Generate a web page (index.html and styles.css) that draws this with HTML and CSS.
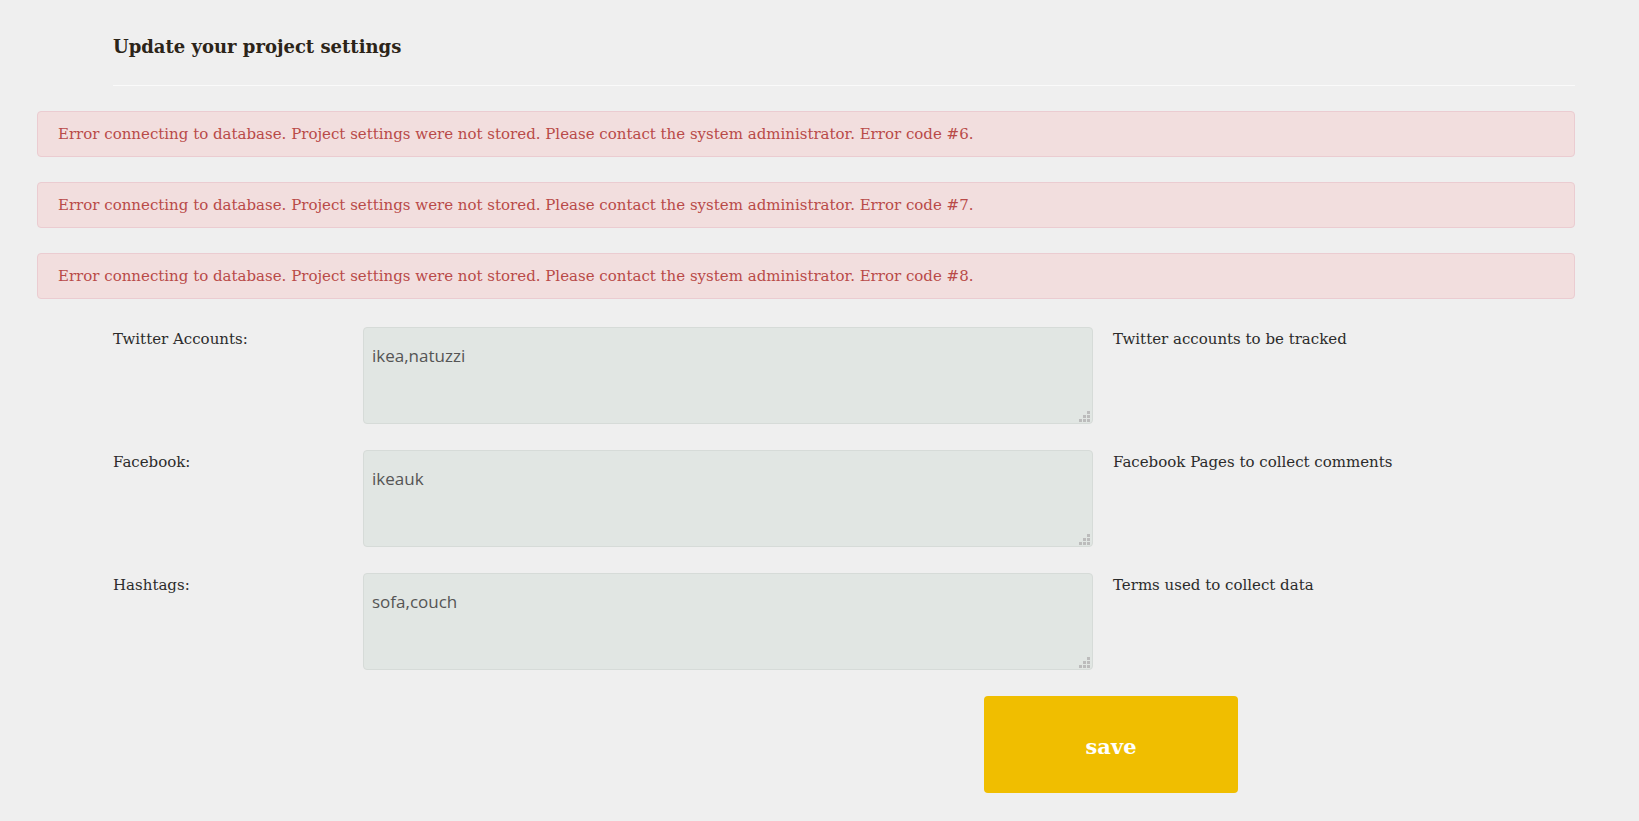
FILE: index.html
```html
<!DOCTYPE html>
<html>
<head>
<meta charset="utf-8">
<link rel="stylesheet" href="styles.css">
</head>
<body>
<div class="page">
  <h2 class="title">Update your project settings</h2>
  <div class="alerts">
    <div class="alert">Error connecting to database. Project settings were not stored. Please contact the system administrator. Error code #6.</div>
    <div class="alert">Error connecting to database. Project settings were not stored. Please contact the system administrator. Error code #7.</div>
    <div class="alert">Error connecting to database. Project settings were not stored. Please contact the system administrator. Error code #8.</div>
  </div>
  <form class="form">
    <div class="row">
      <label class="label">Twitter Accounts:</label>
      <div class="field-wrap"><textarea class="field">ikea,natuzzi</textarea></div>
      <div class="hint">Twitter accounts to be tracked</div>
    </div>
    <div class="row">
      <label class="label">Facebook:</label>
      <div class="field-wrap"><textarea class="field">ikeauk</textarea></div>
      <div class="hint">Facebook Pages to collect comments</div>
    </div>
    <div class="row">
      <label class="label">Hashtags:</label>
      <div class="field-wrap"><textarea class="field">sofa,couch</textarea></div>
      <div class="hint">Terms used to collect data</div>
    </div>
    <div class="actions">
      <button type="button" class="save">save</button>
    </div>
  </form>
</div>
</body>
</html>
```
FILE: styles.css
```css
html, body {
  margin: 0;
  padding: 0;
  background: #efefef;
}
body {
  font-family: "DejaVu Serif", Georgia, serif;
  color: #2b2b2b;
}
.page {
  margin-left: 113px;
  width: 1462px;
  padding-top: 34px;
}
.title {
  margin: 0;
  font-family: "DejaVu Serif", serif;
  font-weight: bold;
  font-size: 18px;
  line-height: 26px;
  color: #2c2418;
  padding-bottom: 25px;
  border-bottom: 1px solid #fafafa;
}
.alerts {
  margin-left: -76px;
  margin-top: 25px;
}
.alert {
  box-sizing: border-box;
  height: 46px;
  margin-bottom: 25px;
  padding: 0 20px;
  display: flex;
  align-items: center;
  background: #f2dede;
  border: 1px solid #ebccd1;
  border-radius: 4px;
  color: #b94a48;
  font-size: 15px;
}
.alert:last-child {
  margin-bottom: 0;
}
.form {
  margin-top: 28px;
}
.row {
  display: grid;
  grid-template-columns: 230px 730px 1fr;
  column-gap: 20px;
  margin-bottom: 26px;
}
.label, .hint {
  font-size: 15px;
  color: #2b2b2b;
  padding-top: 3px;
}
.field-wrap {
  position: relative;
  width: 730px;
  height: 97px;
}
.field-wrap::after {
  content: "";
  position: absolute;
  right: 3px;
  bottom: 2px;
  width: 11px;
  height: 11px;
  background:
    linear-gradient(#bcbcbc, #bcbcbc) 8px 0 / 3px 3px no-repeat,
    linear-gradient(#bcbcbc, #bcbcbc) 4px 4px / 3px 3px no-repeat,
    linear-gradient(#bcbcbc, #bcbcbc) 8px 4px / 3px 3px no-repeat,
    linear-gradient(#bcbcbc, #bcbcbc) 0 8px / 3px 3px no-repeat,
    linear-gradient(#bcbcbc, #bcbcbc) 4px 8px / 3px 3px no-repeat,
    linear-gradient(#bcbcbc, #bcbcbc) 8px 8px / 3px 3px no-repeat;
  pointer-events: none;
}
.field {
  display: block;
  box-sizing: border-box;
  width: 730px;
  height: 97px;
  margin: 0;
  resize: none;
  background: #e1e6e3;
  border: 1px solid #d6dbd8;
  border-radius: 4px;
  padding: 16px 8px;
  font-family: "Open Sans", sans-serif;
  font-size: 17px;
  color: #555;
  outline: none;
}
.actions {
  padding-left: 871px;
}
.save {
  width: 254px;
  height: 97px;
  background: #f0be00;
  border: none;
  border-radius: 4px;
  color: #fff;
  font-family: "DejaVu Serif", serif;
  font-weight: bold;
  font-size: 21px;
  padding: 4px 0 0;
}
```
